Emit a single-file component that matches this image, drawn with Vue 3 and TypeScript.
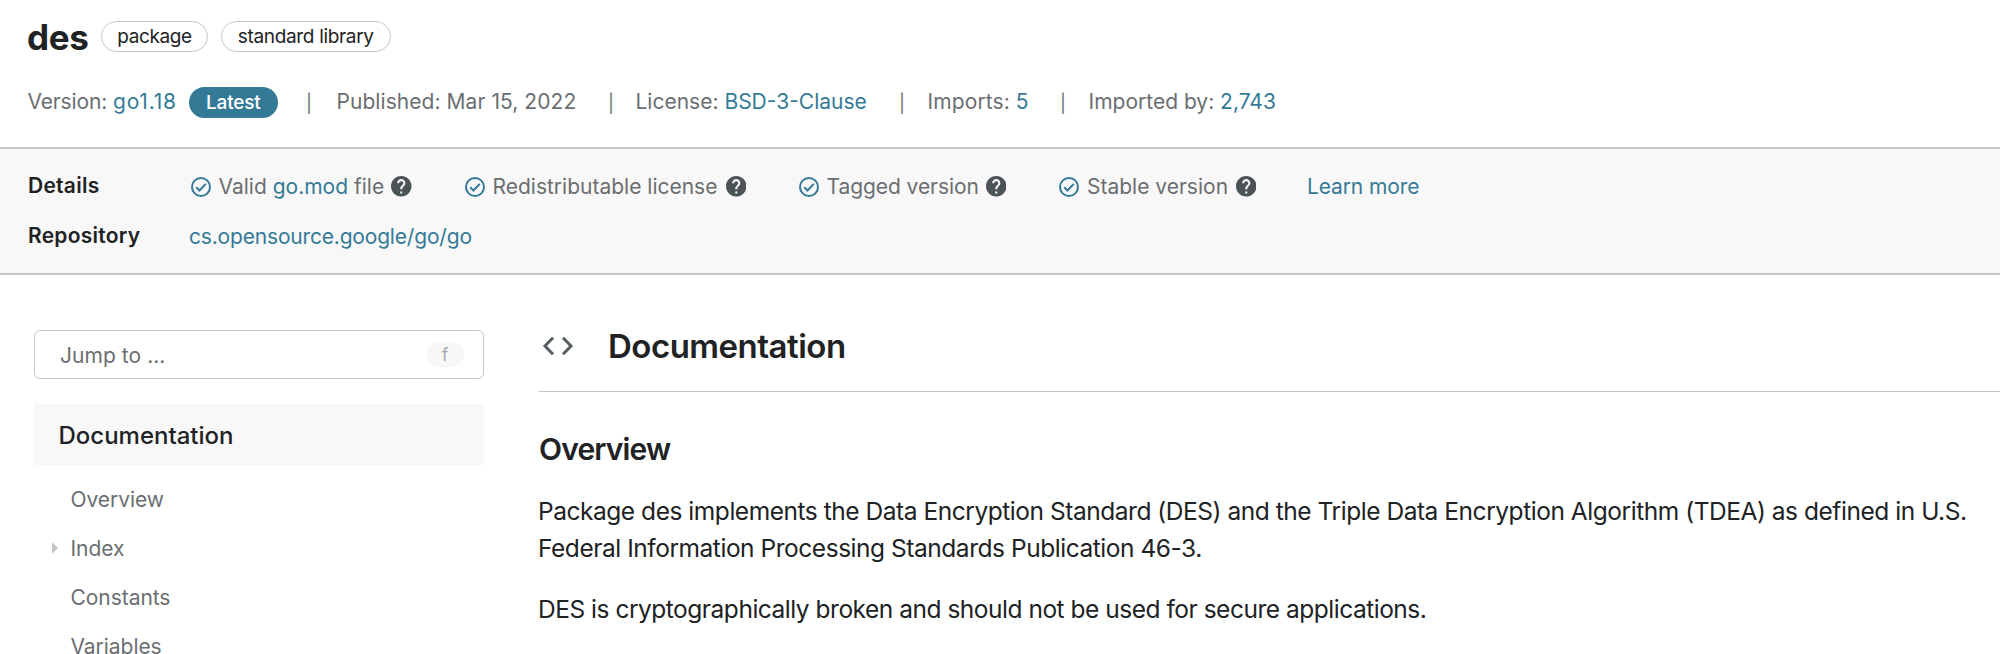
<script setup lang="ts">
interface Link { label: string; arrow?: boolean }
interface Check { pre: string; link?: string; post?: string; kind: string }

const tags = [
  { label: 'package', kind: 'short' },
  { label: 'standard library', kind: 'long' },
]

const checks: Check[] = [
  { pre: 'Valid', link: 'go.mod', post: 'file', kind: 'valid' },
  { pre: 'Redistributable license', kind: 'license' },
  { pre: 'Tagged version', kind: 'tagged' },
  { pre: 'Stable version', kind: 'stable' },
]

const links: Link[] = [
  { label: 'Overview' },
  { label: 'Index', arrow: true },
  { label: 'Constants' },
  { label: 'Variables' },
]
</script>

<template>
  <div class="page">
    <header class="title-row">
      <h1>des</h1>
      <span v-for="t in tags" :key="t.label" class="tag" :class="t.kind">{{ t.label }}</span>
    </header>

    <div class="meta">
      <div class="version">
        <span class="version-label">Version:</span>
        <a class="version-link">go1.18</a>
        <span class="latest">Latest</span>
      </div>
      <span class="bar">|</span>
      <span class="published">Published: Mar 15, 2022</span>
      <span class="bar">|</span>
      <span>License: <a>BSD-3-Clause</a></span>
      <span class="bar">|</span>
      <span class="imports">Imports: <a>5</a></span>
      <span class="bar">|</span>
      <span>Imported by: <a>2,743</a></span>
    </div>

    <section class="details">
      <div class="detail-row">
        <strong>Details</strong>
        <div v-for="c in checks" :key="c.pre" class="check" :class="c.kind">
          <svg class="tick" viewBox="0 0 20 20">
            <circle cx="10" cy="10" r="9" />
            <path d="M5.3 10.3l3.2 3.2 6.3-6.6" />
          </svg>
          <span class="check-text">{{ c.pre }}<template v-if="c.link">&nbsp;<a>{{ c.link }}</a>&nbsp;{{ c.post }}</template></span>
          <svg class="help" viewBox="2 2 20 20">
            <path d="M12 2C6.48 2 2 6.48 2 12s4.48 10 10 10 10-4.48 10-10S17.52 2 12 2zm1 17h-2v-2h2v2zm2.07-7.75l-.9.92C13.45 12.9 13 13.5 13 15h-2v-.5c0-1.1.45-2.1 1.17-2.83l1.24-1.26c.37-.36.59-.86.59-1.41 0-1.1-.9-2-2-2s-2 .9-2 2H8c0-2.21 1.79-4 4-4s4 1.79 4 4c0 .88-.36 1.68-.93 2.25z" />
          </svg>
        </div>
        <a class="learn">Learn more</a>
      </div>
      <div class="detail-row">
        <strong>Repository</strong>
        <a class="repo">cs.opensource.google/go/go</a>
      </div>
    </section>

    <div class="body">
      <nav class="side">
        <div class="jump">
          <span>Jump to ...</span>
          <kbd>f</kbd>
        </div>
        <div class="side-head">Documentation</div>
        <ul>
          <li v-for="l in links" :key="l.label">
            <svg v-if="l.arrow" class="arrow" viewBox="0 0 6 12"><path d="M0 0l6 6-6 6z" /></svg>
            <a>{{ l.label }}</a>
          </li>
        </ul>
      </nav>

      <main>
        <div class="doc-head">
          <svg class="code" viewBox="0 0 32 20">
            <path d="M11 1.8L3 10l8 8.2M21 1.8l8 8.2-8 8.2" />
          </svg>
          <h2>Documentation</h2>
        </div>
        <h3>Overview</h3>
        <p>
          Package des implements the Data Encryption Standard (DES) and the Triple Data Encryption Algorithm (TDEA) as defined in U.S.<br />
          Federal Information Processing Standards Publication 46-3.
        </p>
        <p>DES is cryptographically broken and should not be used for secure applications.</p>
      </main>
    </div>
  </div>
</template>

<style>
body {
  margin: 0;
  background: #fff;
}
</style>

<style scoped>
.page {
  height: 654px;
  overflow: hidden;
  font-family: Inter, "Liberation Sans", sans-serif;
  font-size: 21px;
  color: #202224;
}
a {
  color: #347a97;
}
h1, h2, h3, p, ul {
  margin: 0;
  padding: 0;
}
.title-row {
  display: flex;
  align-items: center;
  height: 73.5px;
  padding-left: 27px;
}
h1 {
  width: 74px;
  padding-top: 1px;
  font-size: 35px;
  line-height: 40px;
  font-weight: 700;
  letter-spacing: -0.3px;
}
.tag {
  box-sizing: border-box;
  height: 31px;
  margin-right: 13px;
  border: 1px solid #c4c6c8;
  border-radius: 16px;
  font-size: 19px;
  line-height: 30px;
  text-align: center;
  letter-spacing: -0.4px;
  white-space: nowrap;
}
.tag.short {
  width: 107px;
}
.tag.long {
  width: 169.5px;
  letter-spacing: -0.33px;
}
.meta {
  display: grid;
  grid-template-columns: 278.5px 30.5px 271.5px 27.5px 263.5px 28.5px 132.5px 28.5px auto;
  align-items: center;
  height: 56px;
  padding: 0 0 17.5px 27.5px;
  color: #6b6e71;
  white-space: nowrap;
}
.version {
  display: flex;
  align-items: center;
}
.version-label {
  width: 85.5px;
  letter-spacing: -0.15px;
}
.version-link {
  width: 76px;
  letter-spacing: 0.8px;
}
.latest {
  width: 88.5px;
  height: 31px;
  margin-top: 2px;
  border-radius: 16px;
  background: #347a97;
  color: #fff;
  font-size: 19px;
  font-weight: 500;
  line-height: 31px;
  text-align: center;
  letter-spacing: -0.2px;
}
.published {
  letter-spacing: 0.06px;
}
.bar {
  padding-top: 3px;
  font-size: 18px;
}
.imports {
  letter-spacing: 0.1px;
}
.details {
  padding: 12px 0 12px 28px;
  border-top: 2px solid #c5c7c8;
  border-bottom: 2px solid #c5c7c8;
  background: #f8f8f8;
}
.detail-row {
  display: flex;
  align-items: center;
  height: 50px;
  white-space: nowrap;
}
.detail-row strong {
  width: 163px;
  margin-top: -1px;
  font-weight: 600;
  letter-spacing: 0.25px;
}
.check {
  display: flex;
  align-items: center;
  margin-left: -0.5px;
  color: #6b6e71;
}
.check-text {
  flex: 1;
  padding-left: 8px;
}
.tick {
  width: 20px;
  height: 20px;
  margin-top: 1px;
  fill: none;
  stroke: #347a97;
  stroke-width: 2;
}
.help {
  width: 20.5px;
  height: 20.5px;
  margin-top: 1px;
  fill: #4b5357;
}
.valid {
  width: 221px;
  margin-right: 53.5px;
}
.license {
  width: 281.5px;
  margin-right: 53px;
}
.tagged {
  width: 207.5px;
  margin-right: 53.5px;
}
.stable {
  width: 197px;
  margin-right: 51px;
}
.tagged .check-text {
  letter-spacing: -0.07px;
}
.learn {
  letter-spacing: -0.12px;
}
.repo {
  margin-left: -2px;
  letter-spacing: -0.18px;
}
.body {
  display: flex;
}
.side {
  width: 449.5px;
  padding: 55px 55.5px 0 34px;
}
.jump {
  box-sizing: border-box;
  display: flex;
  align-items: center;
  justify-content: space-between;
  height: 49px;
  padding: 0 19px 0 25px;
  border: 1.5px solid #c4c6c8;
  border-radius: 6px;
  color: #6b6e71;
}
.jump span {
  padding-top: 2px;
  letter-spacing: 0.05px;
}
kbd {
  width: 37px;
  height: 25px;
  margin-top: -1px;
  border-radius: 13px;
  background: #f7f7f8;
  color: #a8abae;
  font: 18px/26px Inter, sans-serif;
  text-align: center;
}
.side-head {
  height: 60.5px;
  margin-top: 25px;
  padding-left: 24.5px;
  background: #f8f8f8;
  font-size: 24px;
  font-weight: 500;
  line-height: 63px;
}
ul {
  padding-top: 10px;
  list-style: none;
}
li {
  position: relative;
  height: 49px;
  padding-left: 36.5px;
  line-height: 49px;
}
li a {
  color: #6b6e71;
  letter-spacing: -0.05px;
}
.arrow {
  position: absolute;
  left: 18px;
  top: 18.5px;
  width: 6px;
  height: 12px;
  fill: #c4c6c8;
}
main {
  flex: 1;
  padding-top: 25px;
  white-space: nowrap;
}
.doc-head {
  display: flex;
  align-items: center;
  height: 91px;
  border-bottom: 1px solid #c4c6c8;
}
.code {
  width: 32px;
  height: 20px;
  margin-left: 3px;
  fill: none;
  stroke: #555d61;
  stroke-width: 3;
}
h2 {
  padding-left: 34px;
  font-size: 33px;
  line-height: 40px;
  font-weight: 600;
  letter-spacing: -0.5px;
}
h3 {
  margin: 37px 0 24px 0;
  font-size: 30px;
  line-height: 40px;
  font-weight: 600;
  letter-spacing: -0.85px;
}
p {
  margin: 0 0 24.7px -1px;
  font-size: 24.5px;
  line-height: 36.7px;
  letter-spacing: -0.462px;
}
p + p {
  letter-spacing: -0.485px;
}
</style>
